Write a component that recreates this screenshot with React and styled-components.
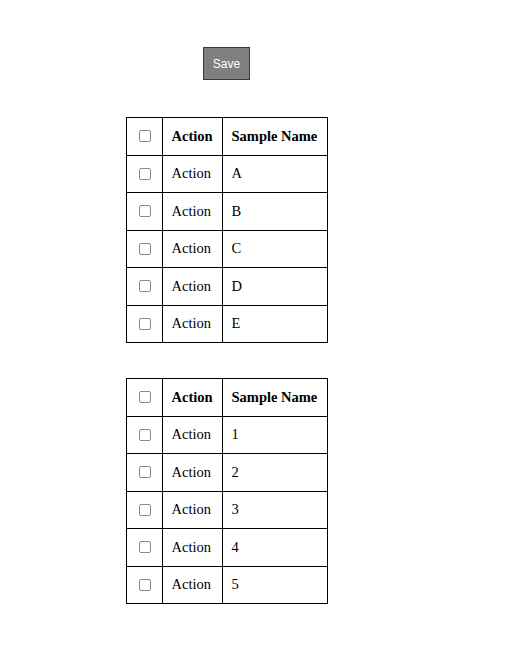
import styled, { createGlobalStyle } from 'styled-components';

const GlobalStyle = createGlobalStyle`
  body {
    margin: 0;
    background: #fff;
    font-family: "Liberation Serif", "Times New Roman", serif;
  }
`;

const Page = styled.div`
  width: 453px;
  display: flex;
  flex-direction: column;
  align-items: center;
  padding-top: 47px;
`;

const SaveButton = styled.button`
  width: 47px;
  height: 33px;
  padding: 0;
  background: #7f7f7f;
  border: 1px solid #3a3a3a;
  color: #fff;
  font-family: "Liberation Sans", Arial, sans-serif;
  font-size: 12px;
  cursor: pointer;
  margin-bottom: 37px;
`;

const Table = styled.table`
  border-collapse: collapse;
  table-layout: fixed;
  width: 202px;
  font-size: 14.5px;
  color: #000;
  margin-bottom: ${props => (props.last ? '0' : '35px')};

  th,
  td {
    border: 1px solid #000;
    height: 37.5px;
    padding: 0 9px;
    text-align: left;
    box-sizing: border-box;
  }

  th {
    font-weight: bold;
  }
`;

const CheckCell = styled.td`
  width: 36px;
  && {
    text-align: center;
    padding: 0;
  }
  line-height: 0;
`;

const Check = styled.input.attrs({ type: 'checkbox' })`
  appearance: none;
  width: 12px;
  height: 12px;
  margin: 0 0 0 2px;
  border: 1px solid #8a8a8a;
  border-radius: 2px;
  background: #fff;
  vertical-align: middle;
`;

const ActionCol = styled.col`
  width: 60px;
`;

const CheckCol = styled.col`
  width: 36px;
`;

const SampleTable = ({ names, last }) => (
  <Table last={last}>
    <colgroup>
      <CheckCol />
      <ActionCol />
      <col />
    </colgroup>
    <thead>
      <tr>
        <CheckCell as="th">
          <Check />
        </CheckCell>
        <th>Action</th>
        <th>Sample Name</th>
      </tr>
    </thead>
    <tbody>
      {names.map(name => (
        <tr key={name}>
          <CheckCell>
            <Check />
          </CheckCell>
          <td>Action</td>
          <td>{name}</td>
        </tr>
      ))}
    </tbody>
  </Table>
);

const App = () => (
  <>
    <GlobalStyle />
    <Page>
      <SaveButton>Save</SaveButton>
      <SampleTable names={['A', 'B', 'C', 'D', 'E']} />
      <SampleTable names={['1', '2', '3', '4', '5']} last />
    </Page>
  </>
);

export default App;
